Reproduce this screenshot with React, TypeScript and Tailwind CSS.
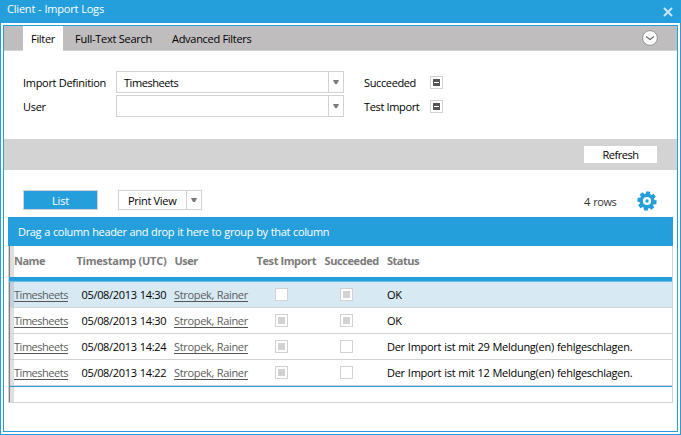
type CheckState = "empty" | "filled" | "mixed";

const logs: { time: string; test: CheckState; ok: CheckState; status: string }[] = [
  { time: "05/08/2013 14:30", test: "empty", ok: "filled", status: "OK" },
  { time: "05/08/2013 14:30", test: "filled", ok: "filled", status: "OK" },
  { time: "05/08/2013 14:24", test: "filled", ok: "empty", status: "Der Import ist mit 29 Meldung(en) fehlgeschlagen." },
  { time: "05/08/2013 14:22", test: "filled", ok: "empty", status: "Der Import ist mit 12 Meldung(en) fehlgeschlagen." },
];

function Arrow() {
  return (
    <svg width="6" height="4" viewBox="0 0 6 4" className="block">
      <path d="M0 0H6L4 4H2Z" fill="#7a7a7a" />
    </svg>
  );
}

function Check({ state }: { state: CheckState }) {
  return (
    <span className="flex size-[13px] shrink-0 items-center justify-center border border-[#d3d1d2] bg-white">
      {state === "filled" && <span className="size-[7px] bg-[#d3d1d2]" />}
      {state === "mixed" && (
        <span className="flex size-[7px] items-center justify-center bg-[#555]">
          <span className="h-px w-[5px] bg-white" />
        </span>
      )}
    </span>
  );
}

function Combo({ value }: { value?: string }) {
  return (
    <div className="flex h-[22px] w-[228px] border border-[#d3d1d2] bg-white">
      <span className="flex-1 pt-[3px] pl-[7px] tracking-[-0.45px]">{value}</span>
      <span className="flex w-[15px] items-center justify-center border-l border-[#d3d1d2] pb-px">
        <Arrow />
      </span>
    </div>
  );
}

function Gear() {
  return (
    <svg width="20" height="20" viewBox="-10 -10 20 20" className="block">
      <g fill="#259fdb" transform="rotate(8)">
        {[0, 45, 90, 135, 180, 225, 270, 315].map((a) => (
          <path key={a} d="M-2.4-6L-1.9-9.6H1.9L2.4-6Z" transform={`rotate(${a})`} />
        ))}
      </g>
      <circle r="5.8" fill="none" stroke="#259fdb" strokeWidth="3.4" />
      <circle r="1.7" fill="#259fdb" />
    </svg>
  );
}

const columns = "grid grid-cols-[62px_98px_82px_68px_63px_1fr]";

export default function App() {
  return (
    <div className="flex h-[435px] w-[681px] flex-col border border-t-0 border-[#259fdb] bg-white font-['Open_Sans','Noto_Sans',sans-serif] text-[11px] leading-4 whitespace-nowrap text-black">
      <header className="flex h-[23px] shrink-0 items-start justify-between bg-[#259fdb] pr-[7px] pl-1.5 text-white">
        <h1 className="pt-px tracking-[-0.2px] [word-spacing:0.3px]">Client - Import Logs</h1>
        <svg width="10" height="10" viewBox="0 0 10 10" className="mt-[7px] block">
          <path d="M1 1L9 9M9 1L1 9" stroke="#c8e7f6" strokeWidth="2" />
        </svg>
      </header>

      <main className="mx-0.5 mt-0.5 mb-0.5 flex flex-1 flex-col border border-[#259fdb]">
        <nav className="flex h-[25px] shrink-0 border-b border-[#d3d3d3] bg-[#c0bdbe] pr-[19px] pl-[19px]">
          <span className="-mb-px w-10 bg-white pt-[5px] pl-2 tracking-[-0.3px]">Filter</span>
          <span className="w-[97px] pt-[5px] pl-3 tracking-[-0.26px]">Full-Text Search</span>
          <span className="flex-1 pt-[5px] pl-3 tracking-[-0.29px]">Advanced Filters</span>
          <svg width="16" height="16" viewBox="0 0 16 16" className="mt-1 block">
            <circle cx="8" cy="8" r="7.4" fill="white" stroke="#939192" strokeWidth="1" />
            <path d="M4 6.5L8 9.5L12 6.5" fill="none" stroke="#666" strokeWidth="1.1" />
          </svg>
        </nav>

        <section className="flex h-[88px] shrink-0 pt-5 pl-[19px]">
          <div className="flex w-[93px] flex-col gap-2 pt-1 tracking-[-0.3px]">
            <span>Import Definition</span>
            <span>User</span>
          </div>
          <div className="flex w-[248px] flex-col gap-0.5">
            <Combo value="Timesheets" />
            <Combo />
          </div>
          <div className="flex w-[66px] flex-col gap-2 pt-1">
            <span className="tracking-[-0.37px]">Succeeded</span>
            <span className="tracking-[-0.35px]">Test Import</span>
          </div>
          <div className="flex flex-col gap-[11px] pt-[5px]">
            <Check state="mixed" />
            <Check state="mixed" />
          </div>
        </section>

        <div className="flex h-[31px] shrink-0 items-start justify-end bg-[#d3d3d3] pt-[7px] pr-5">
          <button className="h-[17px] w-[73px] bg-white pt-px tracking-[-0.45px]">Refresh</button>
        </div>

        <div className="flex h-[47px] shrink-0 items-start pt-5 pr-5 pl-[19px]">
          <button className="h-5 w-[75px] border border-[#d3d3d3] bg-[#259fdb] pt-0.5 tracking-[-0.2px] text-white">List</button>
          <div className="ml-5 flex h-5 w-[84px] border border-[#d3d1d2]">
            <span className="w-[67px] pt-0.5 pl-[9px] tracking-[-0.3px]">Print View</span>
            <span className="flex flex-1 items-center justify-center border-l border-[#d3d1d2] pb-px">
              <Arrow />
            </span>
          </div>
          <span className="mt-1 ml-auto w-[53px] tracking-[-0.45px] text-[#333] [word-spacing:1px]">4 rows</span>
          <span className="mt-px">
            <Gear />
          </span>
        </div>

        <section className="mx-1 flex flex-col">
          <div className="h-[29px] bg-[#259fdb] pt-[7px] pl-2.5 tracking-[-0.35px] text-white [word-spacing:0.5px]">
            Drag a column header and drop it here to group by that column
          </div>
          <div className="flex h-[157px] border-r border-b border-l border-[#d3d1d2]">
            <div className="flex flex-1 flex-col border-l border-[#808080]">
              <div className="flex h-[31px]">
                <div className="w-1 bg-[#e0dede]" />
                <div className={`${columns} flex-1 pt-[7px] font-bold text-[#7a7a7a]`}>
                  <span className="tracking-[-0.5px]">Name</span>
                  <span className="pl-[0.5px] tracking-[-0.25px]">Timestamp (UTC)</span>
                  <span className="pl-[0.5px] tracking-[-0.5px]">User</span>
                  <span className="pl-[0.5px] tracking-[-0.4px]">Test Import</span>
                  <span className="pl-[0.5px] tracking-[-0.4px]">Succeeded</span>
                  <span className="tracking-[-0.5px]">Status</span>
                </div>
              </div>
              <div className="-ml-px h-[5px] border-b border-[#6bbde6] bg-[#259fdb]" />
              {logs.map((log, i) => (
                <div key={i} className={`flex h-[26px] border-b border-[#d3d1d2] ${i === 0 ? "bg-[#d7e9f3]" : ""}`}>
                  <div className={`w-1 ${i === 0 ? "bg-[#c3d0d8]" : "bg-[#e0dede]"}`} />
                  <div className={`${columns} flex-1 pt-[5px]`}>
                    <a className="h-[15px] w-[54px] border-b border-[#555] tracking-[-0.47px] text-[#5c5c5c]">Timesheets</a>
                    <span className="pl-[5.5px] tracking-[-0.32px] [word-spacing:0.5px]">{log.time}</span>
                    <a className="h-[15px] w-[74px] border-b border-[#555] tracking-[-0.31px] text-[#5c5c5c]">Stropek, Rainer</a>
                    <span className="pt-px pl-[19px]">
                      <Check state={log.test} />
                    </span>
                    <span className="pt-px pl-4">
                      <Check state={log.ok} />
                    </span>
                    <span className="tracking-[-0.27px] [word-spacing:0.4px]">{log.status}</span>
                  </div>
                </div>
              ))}
              <div className="-ml-px h-px bg-[#259fdb]" />
              <div className="w-1 flex-1 bg-[#e0dede]" />
            </div>
          </div>
        </section>
      </main>
    </div>
  );
}
